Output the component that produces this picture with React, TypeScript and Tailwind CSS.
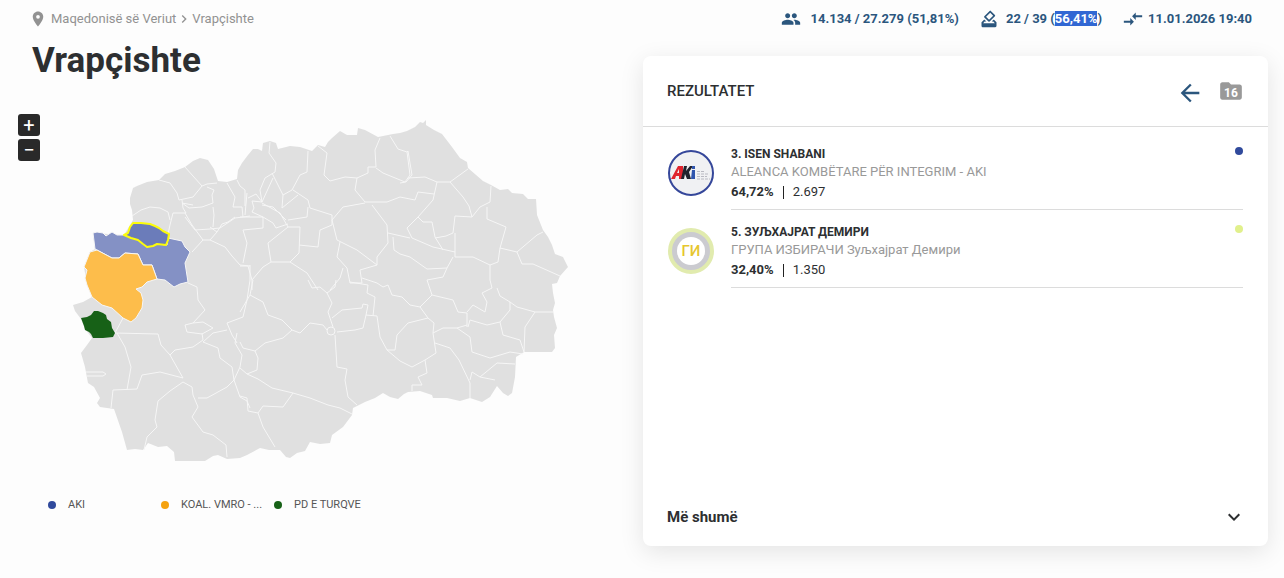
import { MdArrowBack, MdChevronRight, MdCompareArrows, MdFolder, MdHowToVote, MdKeyboardArrowDown, MdLocationOn, MdPeople } from 'react-icons/md';

interface CandidateI {
	name: string;
	party: string;
	percent: string;
	votes: string;
	dot: string;
	logo: React.ReactNode;
}

const OUTLINE =
	'133,220 132,210 130,204 130,198 133,188 137,186 147,182 159,180 165,174 175,171 185,167 193,161 200,158 208,160 214,169 218,181 227,182 237,179 238,170 242,163 248,155 253,149 258,149 262,151 263,143 270,141 276,143 278,149 290,146 300,147 312,151 318,145 325,147 328,142 332,138 340,131 347,135 357,135 358,128 365,130 378,137 393,134 400,133 407,131 415,127 420,122 423,123 426,120 426,125 434,130 442,134 452,147 460,158 467,162 468,168 483,181 491,185 500,190 508,189 512,193 523,194 528,199 536,199 537,215 543,230 548,237 552,245 555,254 563,257 568,267 560,276 557,283 552,284 553,293 555,303 553,310 554,317 557,328 554,335 555,348 552,352 524,352 516,357 515,377 512,393 508,396 503,393 497,386 490,397 482,402 470,398 460,401 447,398 433,398 432,395 420,391 408,392 404,394 398,399 390,397 383,393 375,398 365,402 353,408 352,415 343,427 332,435 330,443 320,444 310,442 305,451 297,453 290,458 286,457 280,450 269,450 260,448 247,455 240,458 227,459 218,455 213,456 205,461 175,461 174,452 167,446 158,447 148,443 143,450 135,449 127,450 122,432 114,409 100,407 97,403 100,398 94,387 88,383 85,367 81,353 87,345 92,338 85,329 81,319 75,311 73,305 83,302 92,297 87,285 84,267 90,252 95,249 93,233 124,235';

const BORDERS = [
	'185,167 193,176 202,186 193,197 179,200 177,193 170,183 159,180',
	'202,186 207,184 217,183',
	'207,187 214,190 212,195 213,203 202,207 189,208 182,203 193,205',
	'132,216 141,210 150,207 160,208 168,212 170,220',
	'182,200 183,208 186,213 173,213 170,225 168,234',
	'213,207 214,215 213,227',
	'227,183 235,197 233,207 242,207 243,217 250,216',
	'237,180 240,186 245,190 245,206',
	'243,217 235,218 220,228 210,229 195,230 185,217',
	'185,213 192,225 203,240 192,252',
	'210,227 217,232 210,240 203,240',
	'217,232 222,224 228,222 235,217',
	'210,240 225,247 232,256 240,265 250,266',
	'250,265 250,280 247,300 243,317 227,323 232,335 237,343',
	'188,283 197,287 198,300 205,310 193,323 185,325 187,332 202,334 213,328 203,322 193,323',
	'115,333 158,334 161,345 170,355 183,378',
	'115,333 123,318',
	'117,333 125,347 131,367 127,390',
	'170,355 175,350 193,347 203,340 202,333',
	'203,342 218,348 220,358 232,367 234,380 227,387 207,398 198,398',
	'203,342 213,333 227,330',
	'183,382 192,387 193,395 198,407 192,417 203,432 213,435 226,445 227,457',
	'183,378 160,372 142,375 137,389 113,390 111,408',
	'183,382 170,391 158,401 155,420 157,427 147,437 144,450',
	'86,372 103,372 106,374 103,376 87,376',
	'237,333 235,343 242,355 240,367 234,380 240,397 247,401 250,408',
	'253,280 250,295 240,312',
	'250,295 263,302 268,315 282,320 292,330 300,333 310,323 323,325 327,330',
	'292,330 283,338 265,343 255,351 243,348 240,342',
	'255,351 258,358 257,370 247,374 240,368',
	'247,374 258,379 272,388 293,393 310,398 328,405 340,408 352,414',
	'293,393 283,407 263,406 258,413 248,411 247,398 240,396',
	'258,413 263,427 275,447',
	'335,335 337,367 347,369 345,380 348,397 357,405',
	'308,280 312,288 320,287 327,293 335,287 336,280',
	'327,293 332,303 328,312 333,327',
	'332,318 342,310 362,308 363,304 368,305 366,315 377,316 380,337 387,350 400,361 412,367 425,360',
	'366,315 363,328 355,330 337,332',
	'373,316 375,297 367,293 368,285 350,282',
	'362,278 377,283 383,287 388,285 392,295 402,297 410,305 420,307',
	'387,350 395,350 397,335 408,323 428,318',
	'420,307 432,295 427,280 443,277 447,268',
	'420,307 428,318 434,323 433,333 436,353 425,360 427,373 418,377 422,385 412,385 412,391',
	'432,295 453,300 458,312 467,313 467,327',
	'433,333 443,328 457,328 467,325',
	'435,343 450,348 459,360 470,383 470,398',
	'457,328 470,337 472,352 490,358 510,352 523,354',
	'468,327 470,320 487,325 500,322 510,310 510,302',
	'467,312 473,305 485,312 487,302 482,293 492,288 490,280 490,265',
	'497,288 500,296 510,302 517,307 535,312 554,312',
	'535,312 525,327 524,352',
	'500,322 503,335 520,340 524,352',
	'470,380 472,372 480,377 495,380',
	'480,377 497,363 515,364',
	'407,152 408,151 412,175 406,182 400,183',
	'408,178 425,177 437,182 450,182 468,169',
	'437,182 433,200 418,217 407,228 412,238 433,247 455,252',
	'418,217 423,222 432,222 435,237 443,250',
	'435,238 446,236 453,233 455,216 472,217 469,206 463,197 450,182',
	'472,217 480,207 490,202 491,186',
	'487,207 487,219 506,227 500,248 498,262 490,265 473,257 455,257 455,233',
	'500,248 517,252 537,235 543,232',
	'517,252 522,264 533,264 560,276',
	'387,202 400,197 415,200 418,192 434,194',
	'394,250 400,254 410,257 427,269 447,268 453,257',
	'270,142 269,153 276,163 275,172 265,178 260,190 262,202 273,178',
	'308,151 307,172 300,175 292,190 283,195',
	'272,173 283,195 282,208 298,195',
	'318,146 327,153 324,175 330,181 345,177 357,178 368,173 368,167 376,167 375,150 380,138',
	'376,168 383,173 405,182 410,175 407,152 398,149 390,136',
	'357,178 355,190 365,202 387,202',
	'293,190 308,200 310,208 332,215 332,225 320,230 318,247 299,245',
	'365,203 343,207 332,220 337,240 357,250 377,265',
	'372,205 387,225 388,243 377,257 377,265',
	'388,233 410,238',
	'393,237 394,250',
	'340,242 337,257 347,268 350,283 362,283 360,270 377,265',
	'262,203 280,213 288,227 300,227 299,253 290,262 271,262 268,243 278,235 288,227',
	'288,220 307,217 308,207',
	'290,262 307,273 318,290',
	'271,262 263,267 252,280 252,290',
	'240,217 263,217 263,228 243,230 247,243 243,263',
	'240,266 248,266 252,280',
	'247,193 245,215',
	'248,198 256,194 262,202 252,201 254,208 252,212 263,217 273,223 276,228 288,224',
	'262,205 273,207 286,220',
	'343,268 340,278 330,290',
];

const DISTRICTS = [
	{
		fill: '#8491c5',
		stroke: '#f6f6f6',
		points:
			'93,233 97,232 103,233 106,236 112,232 117,235 124,235 138,240 147,247 157,244 167,245 168,238 182,241 185,247 190,252 185,263 188,282 180,284 174,287 165,280 157,279 152,265 143,265 138,254 125,253 119,258 112,258 95,249',
	},
	{
		fill: '#fdbd4b',
		stroke: '#f6f6f6',
		points:
			'90,252 97,250 112,258 119,258 125,253 138,254 143,265 152,265 157,279 147,282 142,287 136,289 141,293 143,300 142,308 136,318 131,322 123,318 112,308 102,305 92,297 87,285 85,278 87,270 84,267',
	},
	{
		fill: '#176117',
		stroke: 'none',
		points: '81,318 87,317 91,315 94,311 98,311 103,313 106,315 107,319 111,322 112,328 115,333 113,337 103,338 93,338 91,334 89,332 85,330 84,326',
	},
];

const legend = [
	{ label: 'AKI', dot: 'bg-[#304a9c]' },
	{ label: 'KOAL. VMRO - ...', dot: 'bg-[#f5a20f]' },
	{ label: 'PD E TURQVE', dot: 'bg-[#176117]' },
];

const AkiLogo = () => (
	<svg viewBox="0 0 46 46" className="size-[46px]" aria-hidden="true">
		<circle cx="23" cy="23" r="22" fill="#f0f1f3" stroke="#35479a" strokeWidth="2" />
		<path d="M3 29 10 16h5v13h-4v-3H8l-1 3zM9 23h2v-4z" fill="#e0242e" />
		<path d="M13 29 16 16h3l-1 5 4-5h3l-4 6 2 7h-4l-2-5-1 5z" fill="#20222c" />
		<path d="M24 20h3v9h-4zM24 16h3v3h-3z" fill="#2f55ad" />
		<path d="M29 21.5h8M29 24h12M29 26.5h10M29 29h13" stroke="#b9bac2" strokeWidth="1" strokeDasharray="3 1" />
	</svg>
);

const GiLogo = () => (
	<span className="flex size-[46px] items-center justify-center rounded-full border-4 border-[#e1ebae] bg-[#cbcbd0]">
		<span className="flex size-7 items-center justify-center rounded-full bg-white text-[15px] font-medium text-[#e6c62e]">ГИ</span>
	</span>
);

const candidates: CandidateI[] = [
	{ name: '3. ISEN SHABANI', party: 'ALEANCA KOMBËTARE PËR INTEGRIM - AKI', percent: '64,72%', votes: '2.697', dot: 'bg-[#304a9c]', logo: <AkiLogo /> },
	{ name: '5. ЗУЉХАЈРАТ ДЕМИРИ', party: 'ГРУПА ИЗБИРАЧИ Зуљхајрат Демири', percent: '32,40%', votes: '1.350', dot: 'bg-[#e1f08c]', logo: <GiLogo /> },
];

const DistrictMap = () => (
	<svg viewBox="70 118 502 346" className="mt-1 w-full max-w-[502px]" role="img" aria-label="Maqedonisë së Veriut" strokeLinejoin="round">
		<polygon points={OUTLINE} fill="#e0e0e0" />
		<g fill="none" stroke="#f6f6f6" strokeWidth="1">
			{BORDERS.map((points) => (
				<polyline key={points} points={points} />
			))}
			<circle cx="331" cy="331" r="4" />
		</g>
		{DISTRICTS.map(({ fill, stroke, points }) => (
			<polygon key={fill} points={points} fill={fill} stroke={stroke} strokeWidth="1" />
		))}
		<polygon
			points="124,235 128,233 130,227 133,223 141,223 150,224 155,226 159,228 163,231 169,234 168,240 166,245 157,244 153,246 147,247 143,244 138,240 131,238"
			fill="#6b7cba"
			stroke="#fcfc0a"
			strokeWidth="2"
		/>
	</svg>
);

const Candidate = ({ name, party, percent, votes, dot, logo }: CandidateI) => (
	<li className="flex gap-[17px] pt-3">
		<div className="flex pt-[6px]">{logo}</div>
		<div className="flex min-w-0 flex-1 justify-between border-b border-[#dcdcdc] pb-[9px]">
			<div>
				<h3 className="text-xs leading-5 font-bold">{name}</h3>
				<p className="text-[13px] leading-4 text-[#999]">{party}</p>
				<p className="flex items-center pt-1 text-[13px] leading-4">
					<b>{percent}</b>
					<span className="mx-[9px] h-[13px] w-px bg-[#222]" />
					{votes}
				</p>
			</div>
			<span className={`mt-[3px] size-2 rounded-full ${dot}`} />
		</div>
	</li>
);

const App = () => (
	<div className="min-h-screen bg-[#fdfdfd] font-[Roboto,'Noto_Sans',sans-serif] text-[#2d2f31]">
		<header className="flex h-[38px] items-center justify-between pr-8 pl-[29px]">
			<nav className="flex items-center text-[13px] text-[#929292]">
				<MdLocationOn className="mr-1 size-[18px]" />
				<a href="#vendi">Maqedonisë së Veriut</a>
				<MdChevronRight className="size-4" />
				<a href="#komuna">Vrapçishte</a>
			</nav>
			<div className="flex items-center gap-5 text-[13px] font-bold text-[#2b567d]">
				<span className="flex items-center gap-[10px]">
					<MdPeople className="size-5" />
					14.134 / 27.279 (51,81%)
				</span>
				<span className="flex items-center gap-[7px]">
					<MdHowToVote className="size-5" />
					<span>
						22 / 39 (<mark className="bg-[#3167d3] text-white">56,41%</mark>)
					</span>
				</span>
				<span className="flex items-center gap-1">
					<MdCompareArrows className="size-[22px]" />
					11.01.2026 19:40
				</span>
			</div>
		</header>

		<main className="grid grid-cols-2">
			<section>
				<h1 className="pl-8 text-[35px] leading-[46px] font-bold">Vrapçishte</h1>
				<div className="mt-[30px] flex items-start gap-[30px] pl-[18px]">
					<div className="flex shrink-0 flex-col gap-[3px]">
						<button type="button" aria-label="Zmadho" className="flex size-[22px] items-center justify-center rounded-[3px] bg-[#292929] text-xl leading-none text-white">
							+
						</button>
						<button type="button" aria-label="Zvogëlo" className="flex size-[22px] items-center justify-center rounded-[3px] bg-[#292929] text-xl leading-none text-white">
							−
						</button>
					</div>
					<DistrictMap />
				</div>
				<ul className="mt-[33px] flex pl-12 text-[11px] leading-4 text-[#555]">
					{legend.map(({ label, dot }) => (
						<li key={label} className="flex w-[113px] items-center gap-3 whitespace-nowrap">
							<span className={`size-2 shrink-0 rounded-full ${dot}`} />
							{label}
						</li>
					))}
				</ul>
			</section>

			<section className="mt-[18px] mr-4 mb-8 ml-px flex min-h-[490px] flex-col rounded-lg bg-white shadow-[0_6px_24px_rgba(0,0,0,0.1)]">
				<div className="flex h-[71px] items-center justify-between border-b border-[#dcdcdc] px-6">
					<h2 className="text-[15px] font-medium">REZULTATET</h2>
					<div className="flex items-center gap-[14px]">
						<button type="button" aria-label="Kthehu" className="pt-1 text-[#2b567d]">
							<MdArrowBack className="size-7" />
						</button>
						<button type="button" aria-label="Dosjet" className="relative text-[#999]">
							<MdFolder className="size-[26px]" />
							<span className="absolute inset-0 flex items-center justify-center pt-[3px] text-xs font-bold text-white">16</span>
						</button>
					</div>
				</div>
				<ul className="flex-1 px-[25px] pt-[5px]">
					{candidates.map((candidate) => (
						<Candidate key={candidate.name} {...candidate} />
					))}
				</ul>
				<button type="button" className="flex h-[58px] items-center justify-between pr-[22px] pl-6 text-[15px] font-bold">
					Më shumë
					<MdKeyboardArrowDown className="size-6" />
				</button>
			</section>
		</main>
	</div>
);

export default App;
